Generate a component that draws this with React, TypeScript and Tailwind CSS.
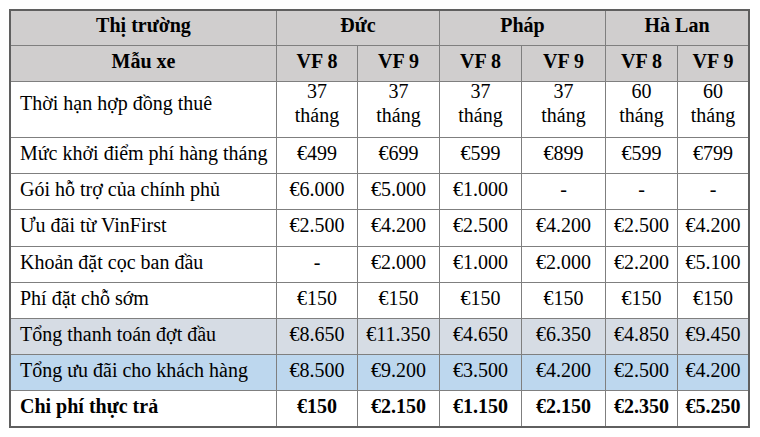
import React from 'react';

type Row = {
    label: string;
    values: string[];
    bg?: string;
    bold?: boolean;
};

const rows: Row[] = [
    { label: 'Thời hạn hợp đồng thuê', values: ['37 tháng', '37 tháng', '37 tháng', '37 tháng', '60 tháng', '60 tháng'] },
    { label: 'Mức khởi điểm phí hàng tháng', values: ['€499', '€699', '€599', '€899', '€599', '€799'] },
    { label: 'Gói hỗ trợ của chính phủ', values: ['€6.000', '€5.000', '€1.000', '-', '-', '-'] },
    { label: 'Ưu đãi từ VinFirst', values: ['€2.500', '€4.200', '€2.500', '€4.200', '€2.500', '€4.200'] },
    { label: 'Khoản đặt cọc ban đầu', values: ['-', '€2.000', '€1.000', '€2.000', '€2.200', '€5.100'] },
    { label: 'Phí đặt chỗ sớm', values: ['€150', '€150', '€150', '€150', '€150', '€150'] },
    { label: 'Tổng thanh toán đợt đầu', values: ['€8.650', '€11.350', '€4.650', '€6.350', '€4.850', '€9.450'], bg: 'bg-[#d6dce4]' },
    { label: 'Tổng ưu đãi cho khách hàng', values: ['€8.500', '€9.200', '€3.500', '€4.200', '€2.500', '€4.200'], bg: 'bg-[#bdd7ee]' },
    { label: 'Chi phí thực trả', values: ['€150', '€2.150', '€1.150', '€2.150', '€2.350', '€5.250'], bold: true },
];

const cell = 'flex items-center border-[#7f7f7f]';

export default function App() {
    return (
        <div className="w-[760px] h-[437px] bg-white pt-[9px] pl-[9px] font-['Liberation_Serif',serif] text-[20px] leading-[24px] text-black">
            <div className="grid w-[741px] grid-cols-[266px_81px_82px_82px_84px_72px_70px] grid-rows-[35px_36px_56px_36px_36px_37px_36px_36px_36px_36px_35px] border-2 border-[#5f5f5f]">
                {/* header */}
                <div className={`${cell} pb-[6px] justify-center border-r border-b bg-[#d0cece] font-bold`}>Thị trường</div>
                <div className={`${cell} pb-[6px] col-span-2 justify-center border-r border-b bg-[#d0cece] font-bold`}>Đức</div>
                <div className={`${cell} pb-[6px] col-span-2 justify-center border-r border-b bg-[#d0cece] font-bold`}>Pháp</div>
                <div className={`${cell} pb-[6px] col-span-2 justify-center border-b bg-[#d0cece] font-bold`}>Hà Lan</div>

                <div className={`${cell} pb-[6px] justify-center border-r border-b bg-[#d0cece] font-bold`}>Mẫu xe</div>
                {['VF 8', 'VF 9', 'VF 8', 'VF 9', 'VF 8', 'VF 9'].map((m, i) => (
                    <div
                        key={i}
                        className={`${cell} pb-[6px] justify-center border-b bg-[#d0cece] font-bold ${i < 5 ? 'border-r' : ''}`}
                    >
                        {m}
                    </div>
                ))}

                {rows.map((r, ri) => {
                    const last = ri === rows.length - 1;
                    const pad = ri === 0 ? 'pb-[14px]' : 'pb-[6px]';
                    return (
                        <React.Fragment key={r.label}>
                            <div
                                className={`${cell} ${pad} pl-[9px] border-r ${last ? '' : 'border-b'} ${r.bg ?? ''} ${r.bold ? 'font-bold' : ''}`}
                            >
                                {r.label}
                            </div>
                            {r.values.map((v, i) => (
                                <div
                                    key={i}
                                    className={`${cell} ${pad} flex-col justify-center text-center ${i < 5 ? 'border-r' : ''} ${last ? '' : 'border-b'} ${r.bg ?? ''} ${r.bold ? 'font-bold' : ''}`}
                                >
                                    {v.includes('tháng') ? (
                                        <>
                                            <span>{v.split(' ')[0]}</span>
                                            <span>tháng</span>
                                        </>
                                    ) : (
                                        <span>{v}</span>
                                    )}
                                </div>
                            ))}
                        </React.Fragment>
                    );
                })}
            </div>
        </div>
    );
}
